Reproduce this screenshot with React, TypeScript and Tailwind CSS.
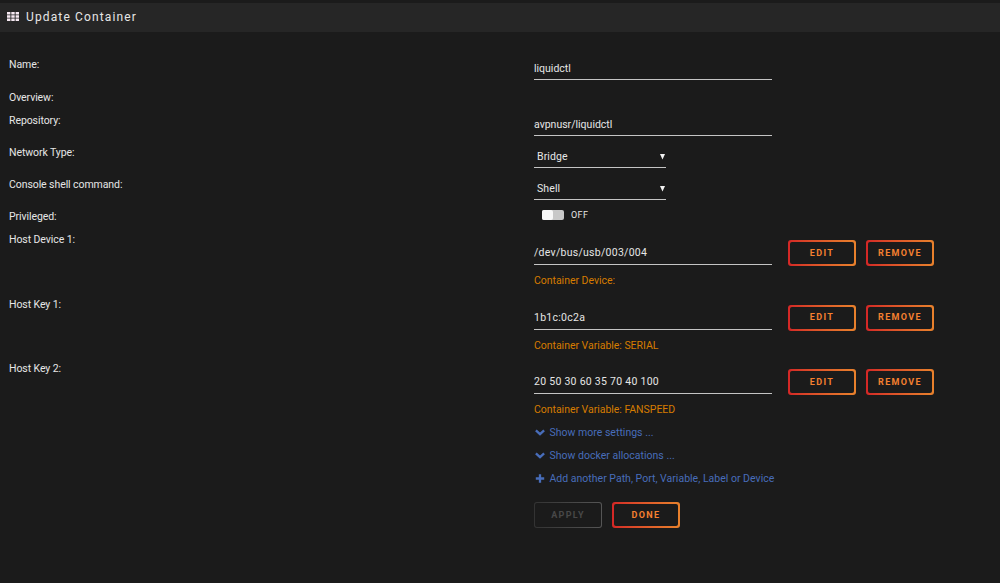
import React from 'react';

const label = 'w-[525px] shrink-0 pt-px text-[10.5px] leading-4 tracking-[-0.08px]';
const input = 'h-6 border-b border-[#c4c4c4] pt-[5px] text-[10.5px] leading-4';

function Row({ name, height, children }: { name: string, height: string, children?: React.ReactNode }) {
  return (
    <div className={`flex items-start pl-[9px] ${height}`}>
      <div className={label}>{name}</div>
      {children}
    </div>
  );
}

function Select({ value }: { value: string }) {
  return (
    <div className={`${input} w-[132px] flex justify-between pl-[3px]`}>
      <span className="tracking-[0.1px]">{value}</span>
      <svg width="5" height="6" viewBox="0 0 5 6" className="mt-[5px] mr-px"><path d="M0 0h5L2.5 5.5z" fill="#f2f2f2" /></svg>
    </div>
  );
}

function Button({ children, disabled }: { children: React.ReactNode, disabled?: boolean }) {
  return (
    <button
      disabled={disabled}
      className={`w-[68px] h-[26px] rounded-[3px] bg-gradient-to-r ${disabled ? 'p-px from-[#333333] to-[#555555] text-[#484848]' : 'p-[2px] from-[#d42626] to-[#e8812c] text-[#f58030]'}`}
    >
      <span className="flex h-full items-center justify-center rounded-[2px] bg-[#1b1b1b] pt-px text-[9px] font-bold tracking-[1.35px]">{children}</span>
    </button>
  );
}

function HostRow({ name, value, caption }: { name: string, value: string, caption: string }) {
  return (
    <Row name={name} height="h-[64.5px]">
      <div>
        <div className="flex pt-[9px]">
          <div className={`${input} h-[25px] w-[238px] tracking-[0.27px]`}>{value}</div>
          <div className="ml-4 flex gap-[10px]">
            <Button>EDIT</Button>
            <Button>REMOVE</Button>
          </div>
        </div>
        <div className="mt-[7px] text-[10.5px] leading-4 tracking-[-0.03px] text-[#d67c00]">{caption}</div>
      </div>
    </Row>
  );
}

function Chevron() {
  return <svg width="10" height="7" viewBox="0 0 10 7" fill="none" stroke="#486dba" strokeWidth="2.3"><path d="M.9 1.3 5 5.2 9.1 1.3" /></svg>;
}

function Plus() {
  return <svg width="10" height="9" viewBox="0 0 10 9" fill="none" stroke="#486dba" strokeWidth="2.3"><path d="M5 .3v8.4M.8 4.5h8.4" /></svg>;
}

export default function App() {
  return (
    <div className="h-[583px] w-[1000px] overflow-hidden bg-[#1b1b1b] pt-[3px] font-[Roboto,sans-serif] text-[#e6e6e6]">
      <header className="mb-6 flex h-[29px] items-center bg-[#262626] pb-[2px] pl-[7px]">
        <svg width="12" height="9" viewBox="0 0 12 9" fill="#f6e9f2">
          <path d="M0 0h3.4v2.4H0zM4.3 0h3.4v2.4H4.3zM8.6 0H12v2.4H8.6zM0 3.3h3.4v2.4H0zM4.3 3.3h3.4v2.4H4.3zM8.6 3.3H12v2.4H8.6zM0 6.6h3.4V9H0zM4.3 6.6h3.4V9H4.3zM8.6 6.6H12V9H8.6z" />
        </svg>
        <h1 className="ml-[7px] text-xs tracking-[1.14px]">Update Container</h1>
      </header>

      <main>
        <Row name="Name:" height="h-[33px]"><div className={`${input} w-[238px]`}>liquidctl</div></Row>
        <Row name="Overview:" height="h-[23px]" />
        <Row name="Repository:" height="h-[32px]"><div className={`${input} w-[238px]`}>avpnusr/liquidctl</div></Row>
        <Row name="Network Type:" height="h-[32px]"><Select value="Bridge" /></Row>
        <Row name="Console shell command:" height="h-[32px]"><Select value="Shell" /></Row>
        <Row name="Privileged:" height="h-[23px]">
          <div className="flex items-center pt-px pl-[7.5px]">
            <div className="h-[10px] w-[22px] rounded-[2px] bg-[#c8c8c8]"><div className="h-full w-[11px] rounded-[2px] bg-[#f8f8f8]" /></div>
            <span className="ml-[7.5px] text-[9px] leading-3 tracking-[0.4px]">OFF</span>
          </div>
        </Row>
        <HostRow name="Host Device 1:" value="/dev/bus/usb/003/004" caption="Container Device:" />
        <HostRow name="Host Key 1:" value="1b1c:0c2a" caption="Container Variable: SERIAL" />
        <HostRow name="Host Key 2:" value="20 50 30 60 35 70 40 100" caption="Container Variable: FANSPEED" />

        <div className="-mt-[3.5px] ml-[535px] flex flex-col text-[10.5px] tracking-[0.01px] text-[#486dba]">
          <a className="flex h-[23px] items-center gap-[4.5px]"><Chevron />Show more settings ...</a>
          <a className="flex h-[23px] items-center gap-[4.5px]"><Chevron />Show docker allocations ...</a>
          <a className="flex h-[23px] items-center gap-[4.5px]"><Plus />Add another Path, Port, Variable, Label or Device</a>
        </div>
        <div className="mt-3 ml-[534px] flex gap-[10px]">
          <Button disabled>APPLY</Button>
          <Button>DONE</Button>
        </div>
      </main>
    </div>
  );
}
